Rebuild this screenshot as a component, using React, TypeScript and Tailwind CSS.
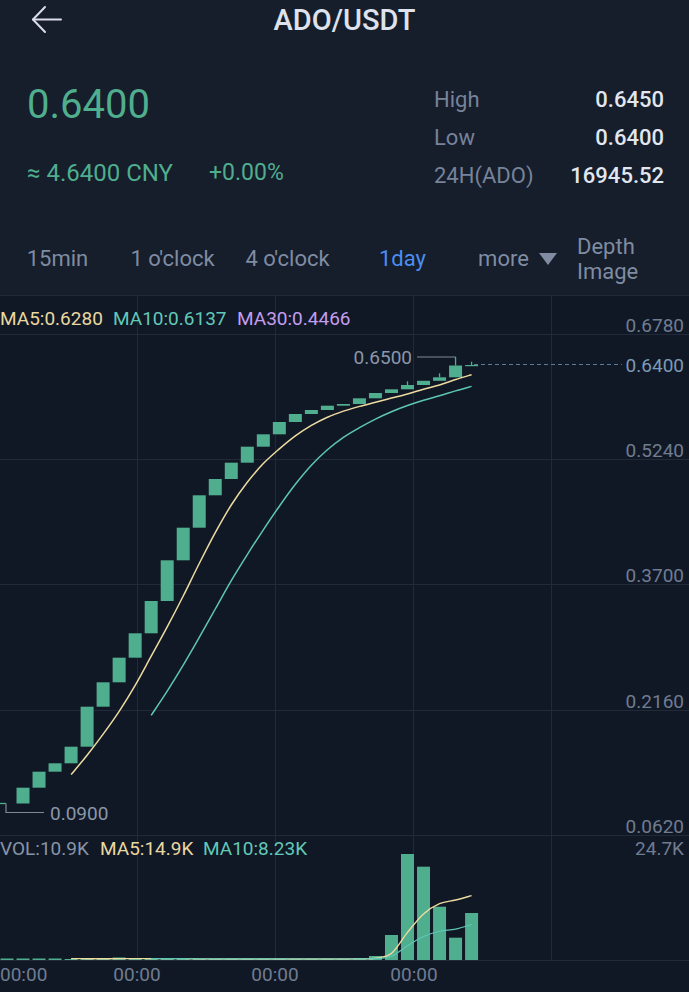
const X0 = 7
const DX = 16.02
const BW = 13

// candle closes in page y (open = previous close)
const closes = [803.5, 787.7, 771.7, 763.3, 746.7, 706.7, 682.3, 657.7, 633.3, 601, 560.3, 527.7, 495.3, 479, 462.7, 446.7, 434.3, 422, 414, 410, 405.7, 404, 398.3, 393, 389.3, 385, 380.8, 377.3, 365.5, 365]
const highs: Record<number, number> = { 25: 381.3, 27: 373.3, 28: 356.8, 29: 361.7 }
// volume bar heights above the baseline
const vols = [1.5, 1.5, 1.5, 1.5, 1, 1, 1, 2.5, 1.5, 1, 1, 1, 1, 1, 1, 1, 1, 1, 1, 1, 1, 1, 2, 4, 25, 106, 93.3, 53.3, 22.3, 47]

const VOL_BASE = 960
const cx = (k: number) => X0 + DX * k

function ma(values: number[], n: number) {
  const out: [number, number][] = []
  for (let i = n - 1; i < values.length; i++) {
    let s = 0
    for (let j = i - n + 1; j <= i; j++) s += values[j]
    out.push([cx(i), s / n])
  }
  return out
}

function smooth(pts: [number, number][]) {
  let d = `M${pts[0][0]},${pts[0][1]}`
  for (let i = 0; i < pts.length - 1; i++) {
    const p0 = pts[i - 1] || pts[i]
    const p1 = pts[i]
    const p2 = pts[i + 1]
    const p3 = pts[i + 2] || p2
    const c1x = p1[0] + (p2[0] - p0[0]) / 6
    const c1y = p1[1] + (p2[1] - p0[1]) / 6
    const c2x = p2[0] - (p3[0] - p1[0]) / 6
    const c2y = p2[1] - (p3[1] - p1[1]) / 6
    d += ` C${c1x},${c1y} ${c2x},${c2y} ${p2[0]},${p2[1]}`
  }
  return d
}

const GRID = '#222a39'
const GREEN = '#4fae8e'
const FONT = 'Roboto, sans-serif'

function Chart() {
  const priceLines = [
    { y: 334, label: '0.6780' },
    { y: 459, label: '0.5240' },
    { y: 584, label: '0.3700' },
    { y: 710, label: '0.2160' },
    { y: 835, label: '0.0620' },
  ]
  const ma5 = ma(closes, 5)
  const ma10 = ma(closes, 10)
  const volY = vols.map((v) => VOL_BASE - v)
  const vma5 = ma(volY, 5)
  const vma10 = ma(volY, 10)

  return (
    <svg width="689" height="697" viewBox="0 295 689 697" className="block">
      <rect x="0" y="295" width="689" height="697" fill="#111825" />
      {/* grid */}
      <line x1="0" x2="689" y1="295.5" y2="295.5" stroke={GRID} />
      {priceLines.map((p) => (
        <line key={p.y} x1="0" x2="689" y1={p.y + 0.5} y2={p.y + 0.5} stroke={GRID} />
      ))}
      <line x1="0" x2="689" y1={VOL_BASE + 0.5} y2={VOL_BASE + 0.5} stroke={GRID} />
      {[137, 275, 413, 551].map((x) => (
        <line key={x} x1={x + 0.5} x2={x + 0.5} y1="295" y2={VOL_BASE} stroke={GRID} />
      ))}

      {/* candles */}
      {closes.map((c, k) => {
        if (k === 0) return null
        const open = closes[k - 1]
        const top = Math.min(open, c)
        const h = Math.max(1.2, Math.abs(open - c))
        const x = cx(k)
        return (
          <g key={k}>
            {highs[k] !== undefined && (
              <line x1={x} x2={x} y1={highs[k]} y2={top} stroke={GREEN} strokeWidth="1.3" />
            )}
            <rect x={x - BW / 2} y={top} width={BW} height={h} fill={GREEN} />
          </g>
        )
      })}
      {/* first (clipped) candle and low marker */}
      <line x1="0" x2="6" y1="803.5" y2="803.5" stroke={GREEN} strokeWidth="1.3" />
      <path d="M6,803.5 V812.5 H44" fill="none" stroke="#7d889a" strokeWidth="1.2" />
      <text x="50" y="819.5" fill="#8a96a9" fontSize="19" fontFamily={FONT}>0.0900</text>

      {/* high marker */}
      <path d={`M417,357 H${cx(28)}`} fill="none" stroke="#7d889a" strokeWidth="1.2" />
      <text x="412" y="364" textAnchor="end" fill="#8a96a9" fontSize="19" fontFamily={FONT}>0.6500</text>

      {/* MA lines */}
      <path d={smooth(ma5)} fill="none" stroke="#eedba0" strokeWidth="1.5" />
      <path d={smooth(ma10)} fill="none" stroke="#5ec6b6" strokeWidth="1.5" />

      {/* last price line */}
      <line x1="474" x2="622" y1="364.5" y2="364.5" stroke="#5b7a99" strokeWidth="1" strokeDasharray="4 3" />
      <text x="684" y="371.5" textAnchor="end" fill="#7b9ab8" fontSize="19" fontFamily={FONT}>0.6400</text>

      {/* price axis */}
      {priceLines.map((p) => (
        <text key={p.label} x="684" y={p.y - 2} textAnchor="end" fill="#6f7c92" fontSize="19" fontFamily={FONT}>
          {p.label}
        </text>
      ))}

      {/* legend */}
      <text y="325" fontSize="19" fontFamily={FONT}>
        <tspan x="0" fill="#e9d7a0">MA5:0.6280</tspan>
        <tspan x="113" fill="#62c8b7">MA10:0.6137</tspan>
        <tspan x="237" fill="#c39df0">MA30:0.4466</tspan>
      </text>

      {/* volume */}
      {vols.map((v, k) => (
        <rect key={k} x={cx(k) - BW / 2} y={VOL_BASE - v} width={BW} height={v} fill={GREEN} />
      ))}
      <path d={smooth(vma5)} fill="none" stroke="#eedba0" strokeWidth="1.4" />
      <path d={smooth(vma10)} fill="none" stroke="#5ec6b6" strokeWidth="1.2" />
      <text y="855" fontSize="19" fontFamily={FONT}>
        <tspan x="0" fill="#8794a8">VOL:10.9K</tspan>
        <tspan x="100" fill="#e9d7a0">MA5:14.9K</tspan>
        <tspan x="203" fill="#62c8b7">MA10:8.23K</tspan>
      </text>
      <text x="684" y="855" textAnchor="end" fill="#6f7c92" fontSize="19" fontFamily={FONT}>24.7K</text>

      {/* time axis */}
      <text x="0" y="981" fill="#6f7c92" fontSize="19" fontFamily={FONT}>00:00</text>
      {[137, 275, 414].map((x) => (
        <text key={x} x={x} y="981" textAnchor="middle" fill="#6f7c92" fontSize="19" fontFamily={FONT}>
          00:00
        </text>
      ))}
    </svg>
  )
}

function BackArrow() {
  return (
    <svg width="32" height="30" viewBox="0 0 32 30" fill="none" stroke="#d9dee8" strokeWidth="2" strokeLinecap="round" strokeLinejoin="round">
      <path d="M2 14.5 H30" />
      <path d="M14 2 L2 14.5 L14 27" />
    </svg>
  )
}

const tabs = ['15min', "1 o'clock", "4 o'clock", '1day']

export default function App() {
  return (
    <div className="w-[689px] h-[992px] overflow-hidden bg-[#161d2b] font-[Roboto,sans-serif] flex flex-col">
      {/* nav bar */}
      <div className="h-[40px] grid grid-cols-[1fr_auto_1fr] items-center">
        <div className="pl-[31px] flex items-center">
          <BackArrow />
        </div>
        <h1 className="text-[29px] leading-none font-medium text-[#dde2ec]">ADO/USDT</h1>
        <div />
      </div>

      {/* ticker */}
      <div className="h-[182px] pt-[41px] pl-[27px] pr-[25px] flex justify-between items-start">
        <div>
          <div className="text-[40px] leading-[48px] text-[#4fae8e]">0.6400</div>
          <div className="mt-[29px] flex items-center gap-[36px] text-[24px] leading-[30px] text-[#4fae8e]">
            <span>≈ 4.6400 CNY</span>
            <span className="text-[23px]">+0.00%</span>
          </div>
        </div>
        <div className="w-[230px] grid grid-cols-2 content-start text-[22px] leading-[38px]">
          <span className="text-[#76839a]">High</span>
          <span className="text-right text-[#e1e6ef] font-medium">0.6450</span>
          <span className="text-[#76839a]">Low</span>
          <span className="text-right text-[#e1e6ef] font-medium">0.6400</span>
          <span className="text-[#76839a] whitespace-nowrap">24H(ADO)</span>
          <span className="text-right text-[#e1e6ef] font-medium">16945.52</span>
        </div>
      </div>

      {/* period tabs */}
      <div className="h-[73px] flex items-center text-[22px] text-[#7f8ca2]">
        {tabs.map((t) => (
          <div key={t} className={`w-[115px] text-center ${t === '1day' ? 'text-[#4a8ef2]' : ''}`}>
            {t}
          </div>
        ))}
        <div className="w-[115px] flex items-center justify-center gap-[10px]">
          <span>more</span>
          <svg width="18" height="12" viewBox="0 0 18 12">
            <path d="M0 0 H18 L9 12 Z" fill="#7f8ca2" />
          </svg>
        </div>
        <div className="pl-[2px] leading-[25px]">
          <div>Depth</div>
          <div>Image</div>
        </div>
      </div>

      <Chart />
    </div>
  )
}
